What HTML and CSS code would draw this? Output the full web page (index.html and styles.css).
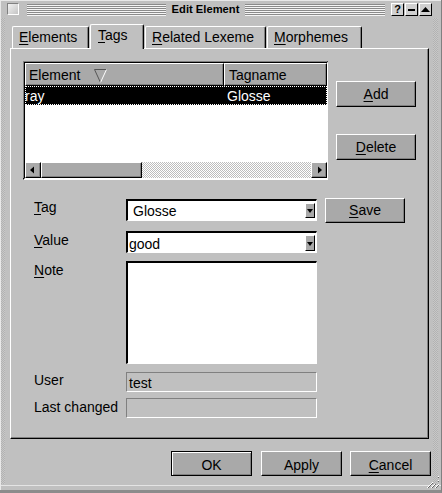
FILE: index.html
```html
<!DOCTYPE html>
<html>
<head>
<meta charset="utf-8">
<link rel="stylesheet" href="styles.css">
</head>
<body>
<div class="window">
  <div class="titlebar">
    <span class="tb-box"></span>
    <span class="groove groove-left"></span>
    <span class="title">Edit Element</span>
    <span class="groove groove-right"></span>
    <span class="tb-btn tb-help">?</span>
    <span class="tb-btn"><svg width="11" height="11" viewBox="0 0 11 11"><rect x="2" y="5" width="7" height="2" fill="#000"/></svg></span>
    <span class="tb-btn"><svg width="11" height="11" viewBox="0 0 11 11"><polygon points="1,8 10,8 5.5,3" fill="#000"/></svg></span>
  </div>

  <div class="tabs">
    <div class="tab tab-elements"><u>E</u>lements</div>
    <div class="tab tab-tags active"><u>T</u>ags</div>
    <div class="tab tab-related"><u>R</u>elated Lexeme</div>
    <div class="tab tab-morph"><u>M</u>orphemes</div>
  </div>

  <div class="pane">
    <div class="top">
      <div class="table">
        <div class="thead">
          <div class="th th-element">Element
            <svg class="sort" width="13" height="14" viewBox="0 0 13 14">
              <line x1="0.5" y1="0.5" x2="12.5" y2="0.5" stroke="#555" stroke-width="1"/>
              <line x1="0.5" y1="0.5" x2="6.5" y2="13.5" stroke="#555" stroke-width="1"/>
              <line x1="12.5" y1="0.5" x2="6.5" y2="13.5" stroke="#fff" stroke-width="1"/>
            </svg>
          </div>
          <div class="th th-tag">Tagname</div>
        </div>
        <div class="tbody">
          <div class="trow selected">
            <span class="td td-element">ray</span>
            <span class="td td-tag">Glosse</span>
          </div>
        </div>
        <div class="hscroll">
          <div class="sb-btn"><svg width="14" height="14" viewBox="0 0 14 14"><polygon points="4,7 8,3.5 8,10.5" fill="#000"/></svg></div>
          <div class="sb-thumb"></div>
          <div class="sb-track"></div>
          <div class="sb-btn"><svg width="14" height="14" viewBox="0 0 14 14"><polygon points="10,7 6,3.5 6,10.5" fill="#000"/></svg></div>
        </div>
      </div>
      <div class="side">
        <div class="btn btn-add"><u>A</u>dd</div>
        <div class="btn btn-delete"><u>D</u>elete</div>
      </div>
    </div>

    <div class="form">
      <div class="frow row-tag">
        <div class="label"><u>T</u>ag</div>
        <div class="combo combo-tag">
          <span class="combo-text">Glosse</span>
          <span class="drop"><svg width="8" height="13" viewBox="0 0 8 13"><polygon points="1,5 7,5 4,9" fill="#000"/></svg></span>
        </div>
        <div class="btn btn-save"><u>S</u>ave</div>
      </div>
      <div class="frow row-value">
        <div class="label"><u>V</u>alue</div>
        <div class="combo combo-value">
          <span class="combo-text edit">good</span>
          <span class="drop"><svg width="8" height="14" viewBox="0 0 8 14"><polygon points="1,6 7,6 4,10" fill="#000"/></svg></span>
        </div>
      </div>
      <div class="frow row-note">
        <div class="label label-note"><u>N</u>ote</div>
        <div class="note"></div>
      </div>
      <div class="frow row-user">
        <div class="label">User</div>
        <div class="ro">test</div>
      </div>
      <div class="frow row-changed">
        <div class="label label-changed">Last changed</div>
        <div class="ro"></div>
      </div>
    </div>
  </div>

  <div class="footer">
    <div class="btn fbtn default">OK</div>
    <div class="btn fbtn btn-apply">Apply</div>
    <div class="btn fbtn btn-cancel"><u>C</u>ancel</div>
  </div>

  <svg class="grip" width="14" height="14" viewBox="0 0 14 14">
    <line x1="13" y1="1" x2="1" y2="13" stroke="#fff"/>
    <line x1="13" y1="2" x2="2" y2="13" stroke="#666"/>
    <line x1="13" y1="5" x2="5" y2="13" stroke="#fff"/>
    <line x1="13" y1="6" x2="6" y2="13" stroke="#666"/>
    <line x1="13" y1="9" x2="9" y2="13" stroke="#fff"/>
    <line x1="13" y1="10" x2="10" y2="13" stroke="#666"/>
  </svg>
</div>
</body>
</html>
```

FILE: styles.css
```css
* { box-sizing: border-box; }

html, body {
  margin: 0;
  padding: 0;
  background: #c0c0c0;
}

body {
  font-family: "Liberation Sans", Arial, sans-serif;
  font-size: 14px;
  color: #000;
}

u { text-decoration: underline; text-underline-offset: 2px; }

.window {
  position: relative;
  width: 442px;
  height: 493px;
  overflow: hidden;
  background: #c0c0c0;
  border-right: 1px solid #808080;
  border-bottom: 3px solid #8c8c8c;
  box-shadow: inset 1px 1px #e8e8e8, inset 0 -4px #c0c0c0, inset 0 -5px #e4e4e4;
}

.window::before {
  content: "";
  position: absolute;
  left: 1px;
  top: 18px;
  bottom: 6px;
  width: 4px;
  background: repeating-conic-gradient(#b2b2b2 0 25%, #c8c8c8 0 50%) 0 0 / 2px 2px;
}

.window::after {
  content: "";
  position: absolute;
  right: 3px;
  top: 18px;
  bottom: 6px;
  width: 5px;
  background: repeating-conic-gradient(#b2b2b2 0 25%, #c8c8c8 0 50%) 0 0 / 2px 2px;
}

/* ---------- title bar ---------- */
.titlebar {
  display: flex;
  align-items: flex-start;
  height: 18px;
  padding-top: 3px;
}

.tb-box {
  width: 12px;
  height: 12px;
  margin-left: 7px;
  border: 1px solid;
  border-color: #808080 #fff #fff #808080;
  background: linear-gradient(135deg, #f2f2f2, #c4c4c4);
}

.groove {
  height: 12px;
  margin-top: 1px;
  background: repeating-linear-gradient(to bottom, #8a8a8a 0 1px, #f4f4f4 1px 2px);
}

.groove-left { width: 139px; margin-left: 8px; }
.groove-right { width: 140px; }

.title {
  width: 79px;
  text-align: center;
  font-size: 11.2px;
  font-weight: bold;
  line-height: 14px;
  margin-top: -1px;
}

.tb-btn {
  width: 13px;
  height: 13px;
  margin-left: 1px;
  border: 1px solid;
  border-color: #fff #000 #000 #fff;
  background: #d0d0d0;
  display: flex;
  align-items: center;
  justify-content: center;
  font-size: 11px;
  font-weight: bold;
  line-height: 11px;
}

.tb-help { margin-left: 6px; }

/* ---------- tabs ---------- */
.tabs {
  display: flex;
  align-items: flex-end;
  height: 24px;
  margin-top: 6px;
  padding-left: 12px;
  position: relative;
  z-index: 1;
}

.tab {
  height: 22px;
  margin-right: 1px;
  padding-left: 6px;
  line-height: 20px;
  border-top: 1px solid #fff;
  border-left: 1px solid #fff;
  border-right: 1px solid #000;
  border-radius: 2px 2px 0 0;
  box-shadow: inset -1px 0 #808080;
  white-space: nowrap;
}

.tab.active {
  height: 25px;
  margin-bottom: -1px;
  line-height: 21px;
  padding-left: 7px;
  background: #c0c0c0;
}

.tab-elements { width: 77px; }
.tab-tags { width: 54px; }
.tab-related { width: 121px; }
.tab-morph { width: 95px; }

/* ---------- pane ---------- */
.pane {
  width: 419px;
  height: 391px;
  margin-left: 10px;
  padding: 12px 0 0 12px;
  border-top: 1px solid #fff;
  border-left: 1px solid #fff;
  border-right: 1px solid #000;
  border-bottom: 1px solid #000;
  box-shadow: inset -1px -1px #808080;
  background: #c0c0c0;
  position: relative;
}

.top {
  display: flex;
  gap: 8px;
}

/* table */
.table {
  width: 305px;
  height: 119px;
  display: flex;
  flex-direction: column;
  border-style: solid;
  border-width: 2px 1px 2px 2px;
  border-color: #000 #fff #fff #000;
  background: #fff;
  position: relative;
}

.table::before {
  content: "";
  position: absolute;
  left: -2px;
  top: -2px;
  right: 0;
  bottom: 0;
  border-top: 1px solid #808080;
  border-left: 1px solid #808080;
  pointer-events: none;
}

.thead {
  display: flex;
  height: 23px;
  flex: none;
}

.th {
  height: 23px;
  padding: 2px 0 0 3px;
  line-height: 19px;
  background: #a9a9a9;
  border: 1px solid;
  border-color: #fff #000 #000 #fff;
  box-shadow: inset -1px -1px #808080;
  display: flex;
  align-items: flex-start;
  white-space: nowrap;
}

.th-element { width: 199px; }
.th-tag { width: 103px; padding-left: 4px; }

.sort {
  margin-left: 14px;
  margin-top: 3px;
}

.tbody {
  flex: 1;
  background: #fff;
}

.trow {
  display: flex;
  height: 19px;
  padding-top: 2px;
  line-height: 17px;
}

.trow.selected {
  background: #000;
  color: #fff;
  outline: 1px dotted #fff;
  outline-offset: -1px;
}

.td-element { width: 201px; padding-left: 0; }
.td-tag { padding-left: 1px; }

.hscroll {
  display: flex;
  height: 16px;
  flex: none;
}

.sb-btn, .sb-thumb {
  height: 16px;
  background: #a9a9a9;
  border: 1px solid;
  border-color: #fff #000 #000 #fff;
  box-shadow: inset -1px -1px #808080;
}

.sb-btn {
  width: 16px;
  display: flex;
  align-items: center;
  justify-content: center;
}

.sb-thumb { width: 101px; }

.sb-track {
  flex: 1;
  background: repeating-conic-gradient(#ffffff 0 25%, #bdbdbd 0 50%) 0 0 / 2px 2px;
}

/* buttons */
.btn {
  background: #a9a9a9;
  border: 1px solid;
  border-color: #fff #000 #000 #fff;
  box-shadow: inset -1px -1px #808080;
  text-align: center;
  white-space: nowrap;
}

.side {
  display: flex;
  flex-direction: column;
  padding-top: 20px;
}

.side .btn {
  width: 80px;
  height: 26px;
  line-height: 24px;
}

.btn-delete { margin-top: 27px; }

/* form */
.form {
  margin-top: 18px;
  margin-left: 11px;
  display: flex;
  flex-direction: column;
}

.frow {
  display: flex;
  align-items: flex-start;
}

.label {
  width: 92px;
  line-height: 16px;
  white-space: nowrap;
}

.row-tag { height: 25px; }
.row-tag .label { margin-top: 1px; }
.row-value { margin-top: 8px; }
.row-value .label { margin-top: 1px; }
.row-note { margin-top: 8px; }
.label-note { margin-top: 1px; }
.row-user { margin-top: 8px; }
.row-changed { margin-top: 6px; }
.label-changed { margin-top: 1px; }

.combo {
  width: 191px;
  height: 22px;
  position: relative;
  display: flex;
  justify-content: space-between;
  background: #fff;
  border-style: solid;
  border-width: 2px 1px 1px 2px;
  border-color: #000 #fff #fff #000;
}

.combo-tag { margin-top: 1px; }

.combo-text {
  padding-left: 5px;
  padding-top: 1px;
  line-height: 18px;
}

.combo-text.edit {
  padding-left: 1px;
  padding-top: 2px;
}

.drop {
  width: 10px;
  height: 15px;
  margin: 2px 1px 0 0;
  background: #a9a9a9;
  border: 1px solid;
  border-color: #fff #000 #000 #fff;
  display: flex;
  align-items: center;
  justify-content: center;
}

.combo-value .drop { height: 16px; margin-top: 2px; }

.btn-save {
  width: 80px;
  height: 25px;
  margin-left: 8px;
  line-height: 23px;
}

.note {
  width: 191px;
  height: 103px;
  background: #fff;
  border-style: solid;
  border-width: 2px 1px 1px 2px;
  border-color: #000 #fff #fff #000;
}

.ro {
  width: 191px;
  height: 20px;
  padding: 1px 0 0 2px;
  line-height: 18px;
  border: 1px solid;
  border-color: #808080 #fff #fff #808080;
  background: #c0c0c0;
}

/* footer */
.footer {
  display: flex;
  justify-content: flex-end;
  padding-right: 10px;
  margin-top: 12px;
}

.fbtn {
  width: 81px;
  height: 25px;
  padding-top: 2px;
  line-height: 22px;
}

.fbtn.default {
  border-color: #000;
  box-shadow: inset 1px 1px #fff, inset -1px -1px #808080;
}

.btn-apply { margin-left: 9px; }
.btn-cancel { margin-left: 8px; }

.grip {
  position: absolute;
  right: 1px;
  bottom: 1px;
}
```
